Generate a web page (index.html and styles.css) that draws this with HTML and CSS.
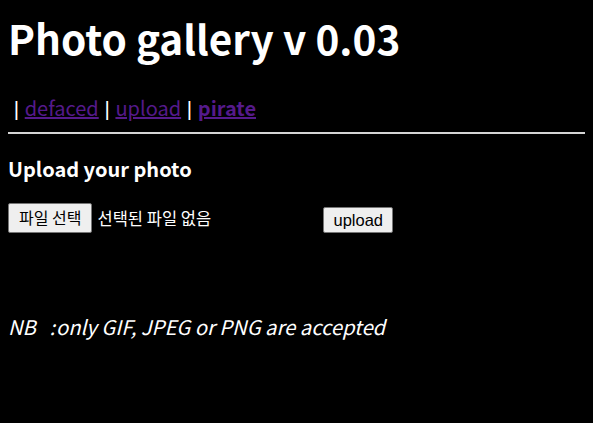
FILE: index.html
```html
<!DOCTYPE html>
<html>
<head>
<meta charset="utf-8">
<link rel="stylesheet" href="styles.css">
</head>
<body>
<h1 class="title">Photo gallery v 0.03</h1>
<p class="nav"><span class="sep">&nbsp;| </span><a href="#" class="link">defaced</a><span class="sep"> | </span><a href="#" class="link">upload</a><span class="sep"> | </span><a href="#" class="link strong">pirate</a></p>
<div class="rule"></div>
<h3 class="sub">Upload your photo</h3>
<form class="form">
  <span class="filebtn">파일 선택</span><span class="nofile">선택된 파일 없음</span><button type="button" class="submit">upload</button>
</form>
<p class="note">NB <span class="colon">:</span>only GIF, JPEG or PNG are accepted</p>
</body>
</html>
```
FILE: styles.css
```css
html {
  background: #000;
  overflow: hidden;
}
body {
  margin: 8px;
  background: #000;
  color: #fff;
  font-family: "Noto Sans CJK KR", "Noto Sans", sans-serif;
  font-size: 20px;
}
.title {
  font-size: 40.5px;
  font-weight: bold;
  margin: 4px 0 30px;
  line-height: 1.3;
}
.nav {
  margin: 0 0 10px;
  line-height: 1.3;
}
.sep {
  font-family: "Liberation Sans", Arial, sans-serif;
  font-size: 20.5px;
}
.link {
  color: #551a8b;
}
.strong {
  font-weight: bold;
}
.rule {
  height: 2px;
  background: #d4d4d4;
  width: calc(100vw - 8px);
}
.sub {
  font-size: 20px;
  margin: 20px 0 20px;
}
.form {
  display: flex;
  align-items: flex-end;
  font-family: "Noto Sans CJK KR", sans-serif;
}
.filebtn {
  background: #efefef;
  color: #000;
  border: 1px solid #767676;
  border-radius: 2px;
  padding: 4px 10px 5px;
  font-size: 16px;
  line-height: 1.2;
}
.nofile {
  margin-left: 5px;
  width: 226px;
  font-size: 16.5px;
  align-self: center;
}
.submit {
  background: #efefef;
  color: #000;
  border: 1px solid #767676;
  border-radius: 2px;
  font-family: "Liberation Sans", Arial, sans-serif;
  font-size: 16.5px;
  padding: 3px 9px;
  line-height: 1.1;
}
.note {
  font-style: italic;
  margin-top: 79px;
  font-size: 20.2px;
}
.colon {
  margin: 0 1px 0 9px;
}
```
